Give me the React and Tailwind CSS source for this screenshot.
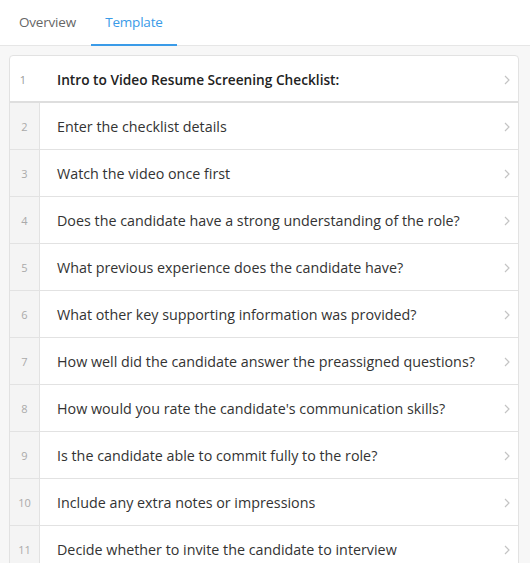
import React from "react";

const items = [
  "Enter the checklist details",
  "Watch the video once first",
  "Does the candidate have a strong understanding of the role?",
  "What previous experience does the candidate have?",
  "What other key supporting information was provided?",
  "How well did the candidate answer the preassigned questions?",
  "How would you rate the candidate's communication skills?",
  "Is the candidate able to commit fully to the role?",
  "Include any extra notes or impressions",
  "Decide whether to invite the candidate to interview",
];

function Chevron() {
  return (
    <svg width="8" height="12" viewBox="0 0 8 12" className="shrink-0">
      <path d="M2 2l4 4-4 4" fill="none" stroke="#c4c4c4" strokeWidth="1.2" />
    </svg>
  );
}

export default function App() {
  return (
    <div className="w-[530px] h-[563px] overflow-hidden bg-[#f7f7f7] text-[#333]" style={{ fontFamily: '"Open Sans", "Noto Sans", sans-serif' }}>
      <div className="flex h-[46px] bg-white border-b border-[#e6e6e6] pl-[19px]">
        <div className="flex items-center text-[13.5px] text-[#666] pb-[1px] tracking-[-0.2px]">Overview</div>
        <div className="ml-[15px] w-[86px] justify-center flex items-center text-[13.5px] text-[#3a9be8] border-b-2 border-[#3a9be8] -mb-px pt-[1px] tracking-[-0.2px]">Template</div>
      </div>
      <div className="pt-[9px] pl-[9px] pr-[11px]">
        <div className="bg-white border border-[#e2e2e2] rounded-t-[4px] overflow-hidden">
          <div className="flex items-center h-[47px] border-b-2 border-[#dedede] pt-[3px]">
            <div className="w-[26px] text-center text-[11px] text-[#999]">1</div>
            <div className="flex-1 pl-[21px] text-[13.7px] font-semibold text-[#222]">Intro to Video Resume Screening Checklist:</div>
            <div className="pr-[7px]"><Chevron /></div>
          </div>
          {items.map((t, i) => (
            <div key={i} className="flex h-[47px] border-b border-[#e2e2e2]">
              <div className="w-[30px] shrink-0 bg-[#f4f4f4] border-r border-[#e2e2e2] flex items-center justify-center text-[11px] text-[#aaa] pt-[2px]">{i + 2}</div>
              <div className="flex-1 flex items-center pl-[17px] text-[14.3px] text-[#333] pt-[1px]">{t}</div>
              <div className="flex items-center pr-[7px] pt-[1px]"><Chevron /></div>
            </div>
          ))}
        </div>
      </div>
    </div>
  );
}
